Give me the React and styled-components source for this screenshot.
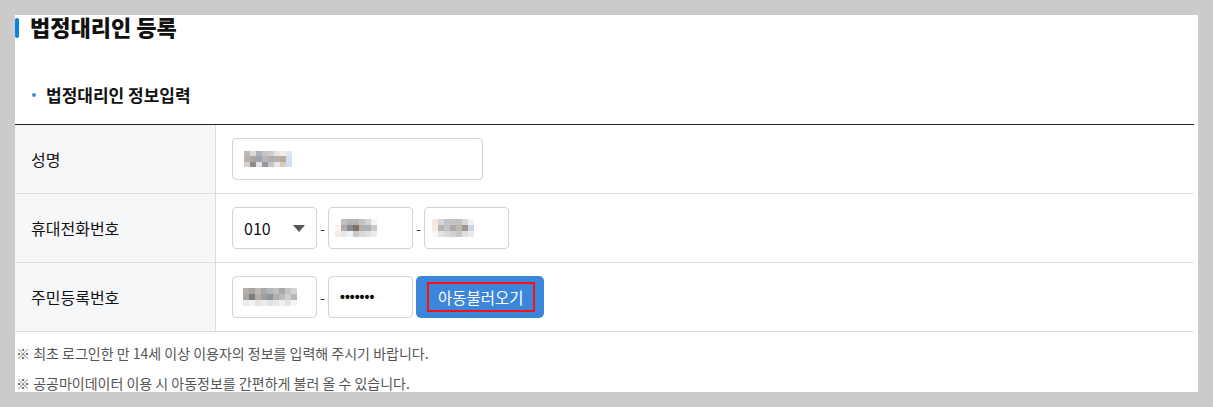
import React from "react";
import styled, { createGlobalStyle } from "styled-components";

const Global = createGlobalStyle`
  html, body { margin: 0; padding: 0; background: #cbcbcb; }
  body { font-family: "Noto Sans CJK KR", "Noto Sans", sans-serif; color: #111; }
  * { box-sizing: border-box; }
`;

const Panel = styled.div`
  margin: 15px 0 0 15px;
  width: 1183px;
  height: 377px;
  background: #fff;
  padding-right: 4px;
`;

const TitleRow = styled.div`
  display: flex;
  align-items: flex-start;
`;

const TitleBar = styled.span`
  width: 4px;
  height: 20px;
  margin-top: 3px;
  border-radius: 2px;
  background: #0a84e4;
  margin-right: 11px;
`;

const Title = styled.h1`
  margin: 0;
  font-size: 22px;
  line-height: 22px;
  font-weight: 900;
  color: #111;
  padding-bottom: 1px;
`;

const SubTitle = styled.h2`
  display: flex;
  align-items: center;
  margin: 47px 0 19px;
  padding-left: 17px;
  font-size: 17px;
  line-height: 20px;
  font-weight: 700;
  color: #111;
`;

const Dot = styled.span`
  width: 4px;
  height: 4px;
  border-radius: 50%;
  background: #3d8fe6;
  margin-right: 10px;
`;

const FormTable = styled.div`
  border-top: 1px solid #222;
`;

const Row = styled.div`
  display: flex;
  height: 69px;
  border-bottom: 1px solid #dcdcdc;
`;

const Label = styled.div`
  width: 201px;
  flex: none;
  display: flex;
  align-items: center;
  padding-left: 16px;
  background: #f6f7f9;
  border-right: 1px solid #dcdcdc;
  font-size: 16px;
  color: #111;
`;

const Cell = styled.div`
  flex: 1;
  display: flex;
  align-items: center;
  padding-left: 16px;
`;

const Field = styled.div`
  width: ${(p) => p.$w}px;
  height: 42px;
  border: 1px solid #d2d2d2;
  border-radius: 4px;
  display: flex;
  align-items: center;
  padding-left: ${(p) => p.$inset ?? 11}px;
  background: #fff;
`;

const SelectBox = styled(Field)`
  justify-content: space-between;
  padding-right: 11px;
  font-size: 16px;
  color: #111;
`;

const Dash = styled.span`
  width: 11px;
  text-align: center;
  font-size: 14px;
  color: #333;
`;

const Dots = styled.span`
  font-family: "Liberation Sans", Arial, sans-serif;
  font-size: 14px;
  font-weight: 700;
  color: #111;
`;

const MosaicGrid = styled.div`
  display: grid;
  grid-template-columns: repeat(${(p) => p.$cols}, ${(p) => p.$cw}px);
  grid-auto-rows: ${(p) => p.$ch}px;
`;

const Pix = styled.span`
  display: block;
`;

const Button = styled.button`
  margin-left: 3px;
  height: 42px;
  padding: 0 9px 0 11px;
  border: none;
  border-radius: 5px;
  background: #3b86db;
  display: flex;
  align-items: center;
  cursor: pointer;
`;

const Highlight = styled.span`
  display: block;
  height: 30px;
  padding: 0 9px;
  border: 2px solid #ff1010;
  font-family: "Noto Sans CJK KR", sans-serif;
  font-size: 15.5px;
  line-height: 26px;
  color: #fff;
`;

const Notes = styled.div`
  height: 60px;
  overflow: hidden;
  padding-top: 6px;
  padding-left: 1px;
`;

const Note = styled.p`
  margin: 0;
  font-size: 14px;
  line-height: 30px;
  color: #555;
`;

const Mosaic = ({ rows, cw = 6, ch = 6 }) => (
  <MosaicGrid $cols={rows[0].length} $cw={cw} $ch={ch}>
    {rows.flat().map((c, i) => (
      <Pix key={i} style={{ background: c }} />
    ))}
  </MosaicGrid>
);

const nameRows = [
  ["#c0b9b4", "#dcdad6", "#aeb1b7", "#c5c4c7", "#cfcdcd", "#e4e4e4", "#f5ece2", "#dbe6f0"],
  ["#bab2ac", "#aaa7a4", "#a0a5ac", "#b9b7b6", "#b0aeaf", "#b9b1a7", "#b3aca2", "#d5e0ea"],
  ["#d3d0cd", "#8e8d8b", "#e0e3e5", "#9a969b", "#c3c4c5", "#e6e6e6", "#dccab6", "#d0def0"],
];
const phone2Rows = [
  ["#ffffff", "#c4bdb8", "#b2b6bc", "#b8b4b0", "#c4c4c6", "#d4d4d4", "#f4f4f4"],
  ["#fbf4ee", "#b2aaa4", "#868c94", "#7c726c", "#b4b0a8", "#aab2ba", "#cacaca"],
  ["#f6ede4", "#e8e8ea", "#f0f2f4", "#c8cace", "#d8d8da", "#e0e0e0", "#ececec"],
];
const phone3Rows = [
  ["#f4e8e0", "#d8d6d4", "#bfc2c8", "#c8c4c0", "#c4c2c0", "#d8d6d4", "#eef0f4"],
  ["#f2ece6", "#b8b2ae", "#c0c4ca", "#aeaaa8", "#bcb8b4", "#9e9690", "#ccd4de"],
  ["#faf8f6", "#e4e2e0", "#d8d8d8", "#d0d0d2", "#c8c8ca", "#e0e0e2", "#e8ecf0"],
];
const idRows = [
  ["#b4aea8", "#a8a4a2", "#bcb8b4", "#a8a6a6", "#b4b6b8", "#c0c0c2", "#a8a8aa", "#c4c4c4", "#d4d4d4"],
  ["#aaa6a4", "#7c7c84", "#b4aea6", "#a09e9e", "#8e949c", "#b0b0b2", "#bcbcbe", "#d0cfcc", "#b8b8bc"],
  ["#ecebea", "#f2f2f2", "#e6e4e2", "#ebebeb", "#e2e2e4", "#e8e8e8", "#f0f0f0", "#e4e4e4", "#f6f6f6"],
];

const Arrow = () => (
  <svg width="12" height="7" viewBox="0 0 12 7">
    <path d="M0 0 H12 L6 7 Z" fill="#555" />
  </svg>
);

export default function App() {
  return (
    <>
      <Global />
      <Panel>
        <TitleRow>
          <TitleBar />
          <Title>법정대리인 등록</Title>
        </TitleRow>
        <SubTitle>
          <Dot />
          법정대리인 정보입력
        </SubTitle>
        <FormTable>
          <Row>
            <Label>성명</Label>
            <Cell>
              <Field $w={251} $inset={11}>
                <Mosaic rows={nameRows} cw={6} ch={5.6} />
              </Field>
            </Cell>
          </Row>
          <Row>
            <Label>휴대전화번호</Label>
            <Cell>
              <SelectBox $w={85}>
                010
                <Arrow />
              </SelectBox>
              <Dash>-</Dash>
              <Field $w={85} $inset={6}>
                <Mosaic rows={phone2Rows} cw={6} ch={6.3} />
              </Field>
              <Dash>-</Dash>
              <Field $w={85} $inset={7}>
                <Mosaic rows={phone3Rows} cw={6} ch={6.3} />
              </Field>
            </Cell>
          </Row>
          <Row>
            <Label>주민등록번호</Label>
            <Cell>
              <Field $w={85} $inset={10}>
                <Mosaic rows={idRows} cw={6} ch={6} />
              </Field>
              <Dash>-</Dash>
              <Field $w={85} $inset={11}>
                <Dots>•••••••</Dots>
              </Field>
              <Button type="button">
                <Highlight>아동불러오기</Highlight>
              </Button>
            </Cell>
          </Row>
        </FormTable>
        <Notes>
          <Note>※ 최초 로그인한 만 14세 이상 이용자의 정보를 입력해 주시기 바랍니다.</Note>
          <Note>※ 공공마이데이터 이용 시 아동정보를 간편하게 불러 올 수 있습니다.</Note>
        </Notes>
      </Panel>
    </>
  );
}
